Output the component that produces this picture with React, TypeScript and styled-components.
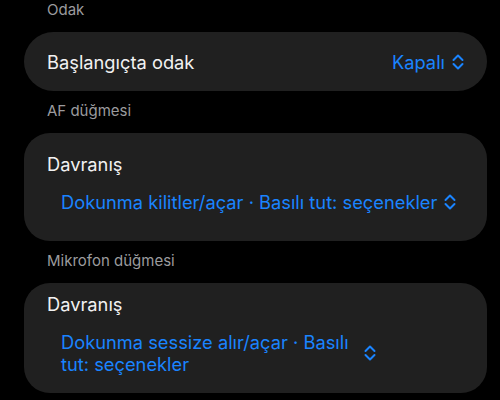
import React from "react"
import styled, { createGlobalStyle } from "styled-components"

const GlobalStyle = createGlobalStyle`
    html, body {
        margin: 0;
        padding: 0;
        background: #000;
    }
    body {
        font-family: 'Inter', 'Noto Sans', sans-serif;
        -webkit-font-smoothing: antialiased;
    }
`

const colors = {
    bg: "#000000",
    card: "#202020",
    header: "#9b9b9e",
    title: "#f2f2f2",
    blue: "#1a84ff",
}

const Page = styled.main`
    width: 500px;
    height: 400px;
    overflow: hidden;
    box-sizing: border-box;
    padding: 0 13px 0 24px;
    display: flex;
    flex-direction: column;
    gap: 10px;
    background: ${colors.bg};
`

const Section = styled.section`
    display: flex;
    flex-direction: column;
`

const SectionHeader = styled.h2`
    margin: 0 0 12px;
    padding-left: 23px;
    font-size: 15px;
    line-height: 20px;
    font-weight: 400;
    color: ${colors.header};
`

const Card = styled.div<{ $pill?: boolean }>`
    box-sizing: border-box;
    background: ${colors.card};
    border-radius: ${(p) => (p.$pill ? "30px" : "26px")};
    min-height: ${(p) => (p.$pill ? "59px" : "108px")};
    padding: ${(p) => (p.$pill ? "0 23px" : "10px 23px 18px")};
    display: flex;
    flex-direction: ${(p) => (p.$pill ? "row" : "column")};
    align-items: ${(p) => (p.$pill ? "center" : "stretch")};
    justify-content: ${(p) => (p.$pill ? "space-between" : "center")};
    gap: 16px;
`

const Label = styled.span`
    font-size: 18.3px;
    line-height: 22px;
    color: ${colors.title};
`

const Picker = styled.button<{ $indent?: boolean }>`
    all: unset;
    display: flex;
    align-items: center;
    gap: 7px;
    padding: ${(p) => (p.$indent ? "0 2px 0 14px" : "0")};
    color: ${colors.blue};
    cursor: pointer;
`

const PickerText = styled.span<{ $maxWidth?: number }>`
    font-size: 18.3px;
    line-height: 22px;
    max-width: ${(p) => (p.$maxWidth ? `${p.$maxWidth}px` : "none")};
`

const ChevronIcon = styled.svg`
    flex: none;
    width: 12px;
    height: 16px;
`

const UpDown = () => (
    <ChevronIcon viewBox="0 0 12 16" fill="none" stroke="currentColor" strokeWidth="2" strokeLinecap="round" strokeLinejoin="round">
        <path d="M1.5 6 L6 1.5 L10.5 6" />
        <path d="M1.5 10 L6 14.5 L10.5 10" />
    </ChevronIcon>
)

const App = () => {
    return (
        <>
            <GlobalStyle />
            <Page>
                <Section>
                    <SectionHeader>Odak</SectionHeader>
                    <Card $pill>
                        <Label>Başlangıçta odak</Label>
                        <Picker>
                            <PickerText>Kapalı</PickerText>
                            <UpDown />
                        </Picker>
                    </Card>
                </Section>
                <Section>
                    <SectionHeader>AF düğmesi</SectionHeader>
                    <Card>
                        <Label>Davranış</Label>
                        <Picker $indent>
                            <PickerText>Dokunma kilitler/açar · Basılı tut: seçenekler</PickerText>
                            <UpDown />
                        </Picker>
                    </Card>
                </Section>
                <Section>
                    <SectionHeader>Mikrofon düğmesi</SectionHeader>
                    <Card>
                        <Label>Davranış</Label>
                        <Picker $indent>
                            <PickerText $maxWidth={296}>Dokunma sessize alır/açar · Basılı tut: seçenekler</PickerText>
                            <UpDown />
                        </Picker>
                    </Card>
                </Section>
            </Page>
        </>
    )
}

export default App
